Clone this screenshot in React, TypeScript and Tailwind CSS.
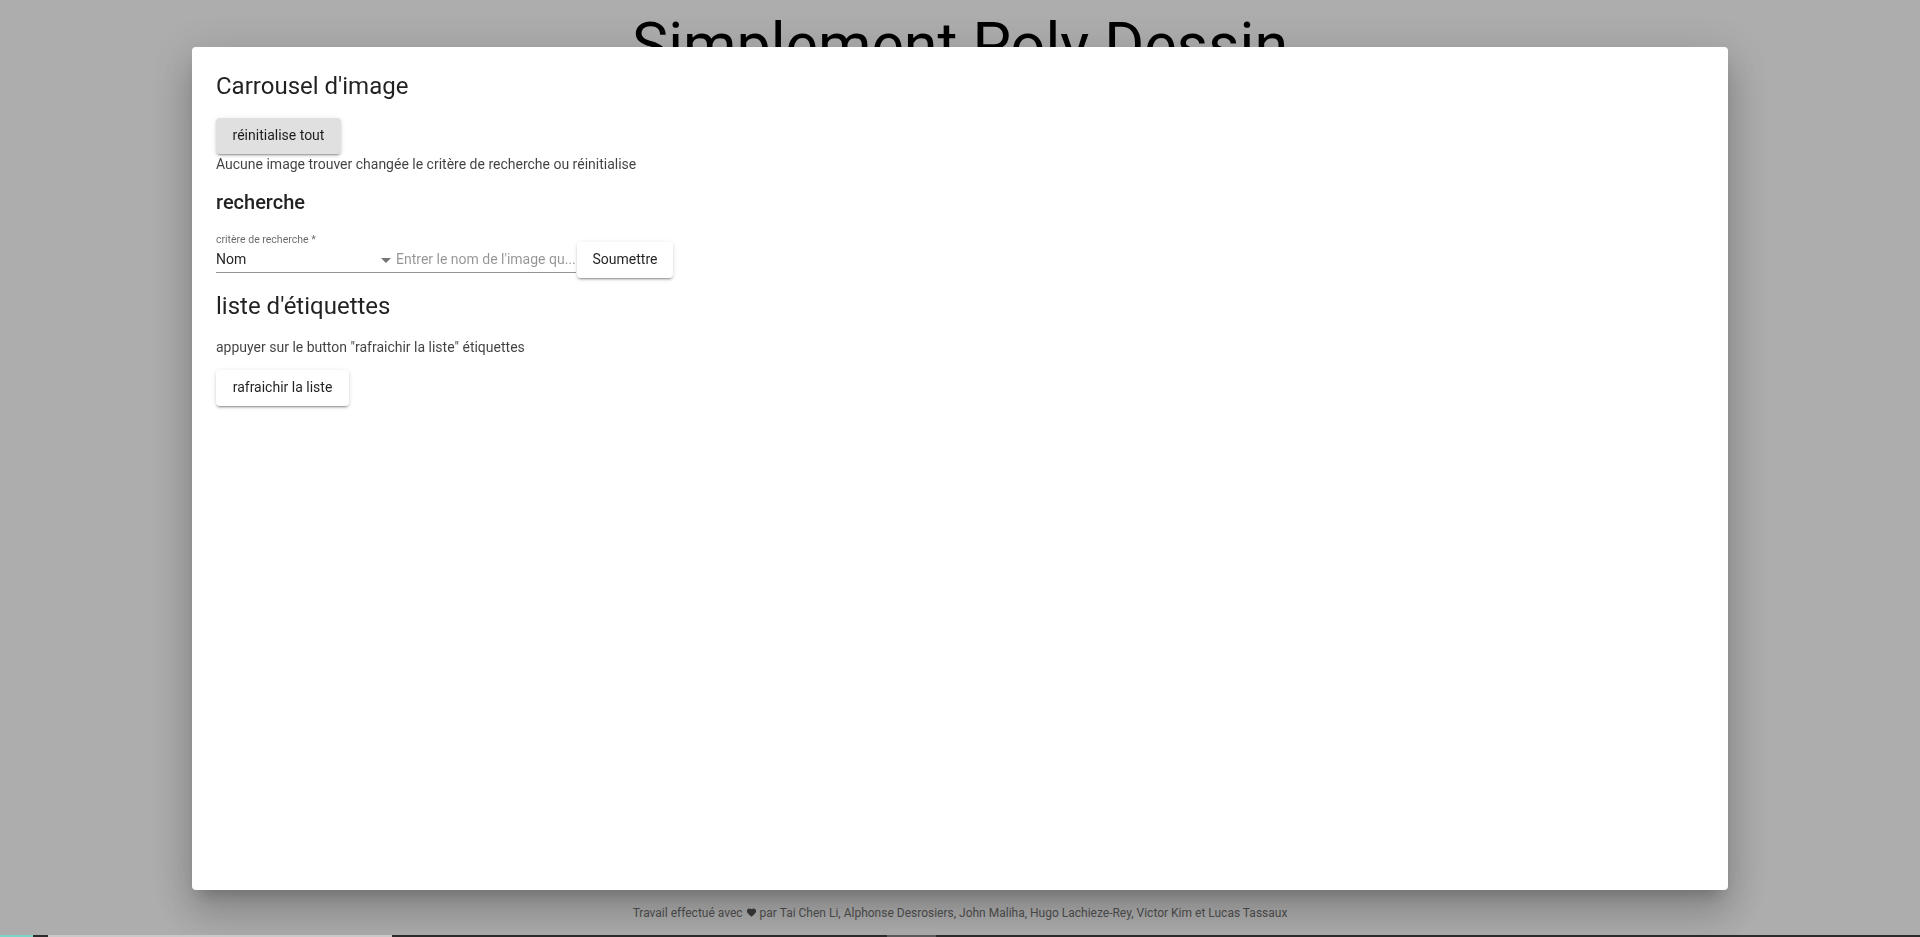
const shadowBtn =
  "shadow-[0px_3px_1px_-2px_rgba(0,0,0,0.2),0px_2px_2px_0px_rgba(0,0,0,0.14),0px_1px_5px_0px_rgba(0,0,0,0.12)]";

const ArrowDrop = () => (
  <svg viewBox="0 0 24 24" className="w-6 h-6 fill-[rgba(0,0,0,0.54)]">
    <path d="M7 10l5 5 5-5z" />
  </svg>
);

const Heart = () => (
  <svg viewBox="0 0 24 24" className="inline-block w-[11px] h-[11px] -mt-[2px] fill-[#555]">
    <path d="M12 21.35l-1.45-1.32C5.4 15.36 2 12.28 2 8.5 2 5.42 4.42 3 7.5 3c1.74 0 3.41.81 4.5 2.09C13.09 3.81 14.76 3 16.5 3 19.58 3 22 5.42 22 8.5c0 3.78-3.4 6.86-8.55 11.54L12 21.35z" />
  </svg>
);

const RechercheForm = () => (
  <div className="flex items-start mt-[16px]">
    <div className="flex flex-col w-[178px]">
      <label className="text-[10.5px] leading-[12px] text-[rgba(0,0,0,0.6)]">critère de recherche *</label>
      <div className="relative h-[27px] flex items-center pt-[2px] border-b border-[rgba(0,0,0,0.42)]">
        <span className="text-[14px] text-[rgba(0,0,0,0.87)]">Nom</span>
        <span className="absolute right-[-4px] top-[2px]">
          <ArrowDrop />
        </span>
      </div>
    </div>
    <div className="flex flex-col w-[182px]">
      <div className="h-[12px]" />
      <div className="h-[27px] flex items-center pt-[2px] border-b border-[rgba(0,0,0,0.42)] overflow-hidden">
        <span className="text-[14px] text-[rgba(0,0,0,0.42)] whitespace-nowrap overflow-hidden text-ellipsis pl-[2px]">
          Entrer le nom de l'image qu...
        </span>
      </div>
    </div>
    <button
      className={`mt-[8px] ml-[1px] h-9 w-[96px] rounded bg-white text-[14px] text-[rgba(0,0,0,0.87)] ${shadowBtn}`}
    >
      Soumettre
    </button>
  </div>
);

const CarrouselDialog = () => (
  <div className="fixed inset-0 z-20 flex items-center justify-center">
    <div className="w-[80%] h-[90%] bg-white rounded shadow-[0px_11px_15px_-7px_rgba(0,0,0,0.2),0px_24px_38px_3px_rgba(0,0,0,0.14),0px_9px_46px_8px_rgba(0,0,0,0.12)] px-6 pt-[23px] text-[rgba(0,0,0,0.87)]">
      <h2 className="text-[24px] leading-8">Carrousel d'image</h2>
      <button className={`mt-4 h-9 w-[125px] rounded bg-[#e0e0e0] text-[14px] ${shadowBtn}`}>
        réinitialise tout
      </button>
      <p className="text-[14px] leading-5 text-[rgba(0,0,0,0.75)]">
        Aucune image trouver changée le critère de recherche ou réinitialise
      </p>
      <h3 className="mt-3 text-[20px] leading-8 font-medium">recherche</h3>
      <RechercheForm />
      <h2 className="mt-[12px] text-[24px] leading-8">liste d'étiquettes</h2>
      <p className="mt-[15px] text-[14px] leading-5 text-[rgba(0,0,0,0.75)]">
        appuyer sur le button "rafraichir la liste" étiquettes
      </p>
      <button className={`mt-[13px] h-9 w-[133px] rounded bg-white text-[14px] ${shadowBtn}`}>
        rafraichir la liste
      </button>
    </div>
  </div>
);

const App = () => {
  return (
    <div className="relative min-h-screen h-[937px] bg-white flex flex-col font-['Roboto',sans-serif] overflow-hidden">
      <h1 className="pt-[9px] text-center text-[61px] leading-[72px] text-black">Simplement Poly Dessin</h1>
      <div className="flex-1" />
      <footer className="pb-[16px] text-center text-[12px] leading-4 text-[#757575]">
        Travail effectué avec <Heart /> par Tai Chen Li, Alphonse Desrosiers, John Maliha, Hugo Lachieze-Rey, Victor Kim et Lucas Tassaux
      </footer>
      <div className="fixed inset-0 z-10 bg-[rgba(0,0,0,0.32)]" />
      <CarrouselDialog />
      <div className="fixed bottom-0 left-0 right-0 z-30 h-[2px] flex">
        <div className="w-[33px] bg-[#7cd4c9]" />
        <div className="w-[15px] bg-[#2b2b2b]" />
        <div className="w-[344px] bg-[#c9c9c9]" />
        <div className="w-[495px] bg-[#2b2b2b]" />
        <div className="w-[49px] bg-[#5a5a5a]" />
        <div className="flex-1 bg-[#2b2b2b]" />
      </div>
    </div>
  );
};

export default App;
